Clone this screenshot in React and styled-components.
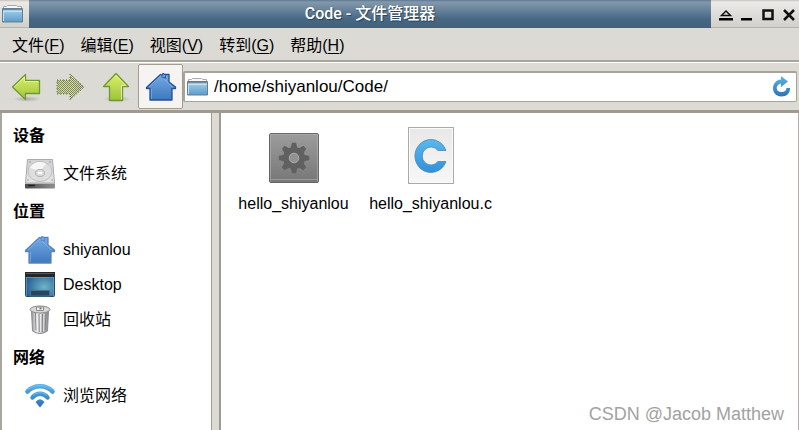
import { useState } from "react";
import styled, { createGlobalStyle } from "styled-components";

const GlobalStyle = createGlobalStyle`
  * {
    box-sizing: border-box;
  }
  body {
    margin: 0;
    background-color: #dcdad5;
    color: #000;
    font-family: "Liberation Sans", "Noto Sans CJK SC", sans-serif;
    font-size: 16px;
    line-height: 20px;
  }
  button,
  input {
    font: inherit;
    color: inherit;
  }
  svg {
    display: block;
    flex-shrink: 0;
  }
`;

const Window = styled.div`
  position: relative;
  display: flex;
  flex-direction: column;
  min-height: 100vh;
`;

const TitleBar = styled.header`
  display: flex;
  height: 28px;
  background: linear-gradient(#5f788f 0, #8398ab 2px, #5c7a95 13px, #486782 19px, #40607c 100%);
`;

const TitleIcon = styled.div`
  display: flex;
  align-items: center;
  width: 29px;
  padding-left: 2px;
  background: linear-gradient(#c4c2be 0, #ebeae7 2px, #d2d0cb 100%);
  border-bottom: 1px solid #b5b2ac;
`;

const Title = styled.h1`
  flex: 1;
  margin: 0;
  font-family: Roboto, "Noto Sans CJK SC", sans-serif;
  font-size: 16px;
  font-weight: 500;
  line-height: 28px;
  text-align: center;
  color: #fff;
  text-shadow: 1px 1px 1px #2b4257;
`;

const WindowButtons = styled.div`
  display: flex;
  padding: 0 0 0 4px;
  background: linear-gradient(#c4c2be 0, #ebeae7 2px, #d2d0cb 100%);
  border-bottom: 1px solid #b5b2ac;
`;

const WindowButton = styled.button`
  display: flex;
  align-items: center;
  justify-content: center;
  width: 21px;
  padding: 2px 0 0;
  border: none;
  background: none;
`;

const MenuBar = styled.nav`
  display: flex;
  gap: 16px;
  height: 34px;
  padding: 0 12px;
  border-bottom: 2px solid #aaa69e;
`;

const MenuButton = styled.button`
  padding: 3px 0 0;
  border: none;
  background: none;
  & u {
    text-underline-offset: 2px;
    text-decoration-thickness: 1px;
  }
`;

const Toolbar = styled.div`
  display: flex;
  align-items: center;
  height: 51px;
  padding: 0 2px 0 3px;
  border-top: 1px solid #fff;
  border-bottom: 3px solid #a19a90;
`;

const ToolButton = styled.button`
  display: flex;
  align-items: center;
  justify-content: center;
  width: 45px;
  height: 45px;
  padding: 0;
  border: ${(props) => (props.$active ? "1px solid #a59b8f" : "none")};
  border-radius: 2px;
  background: ${(props) => (props.$active ? "#f5f4f2" : "none")};
`;

const AddressBar = styled.label`
  display: flex;
  flex: 1;
  align-items: center;
  gap: 5px;
  height: 31px;
  padding: 0 4px 0 2px;
  border: 2px solid #a8a298;
  border-right-width: 1px;
  border-bottom-width: 1px;
  border-radius: 2px;
  background-color: #fff;
`;

const AddressInput = styled.input`
  flex: 1;
  min-width: 0;
  padding: 0;
  border: none;
  outline: none;
  background: none;
  font-size: 17px;
`;

const ReloadButton = styled.button`
  padding: 0;
  border: none;
  background: none;
`;

const Panes = styled.div`
  display: flex;
  flex: 1;
`;

const Sidebar = styled.aside`
  width: 212px;
  padding: 2px 0 12px;
  border-left: 2px solid #a9a59e;
  border-right: 1px solid #a19a90;
  background-color: #fff;
`;

const SidebarHeading = styled.h2`
  margin: 0;
  padding-left: 11px;
  font-size: 16px;
  font-weight: 700;
  line-height: 41px;
`;

const PlaceList = styled.ul`
  margin: 0;
  padding: 0;
  list-style: none;
`;

const PlaceLink = styled.a`
  display: flex;
  align-items: center;
  gap: 7px;
  height: 35px;
  padding-left: 22px;
  color: inherit;
  text-decoration: none;
`;

const FileArea = styled.main`
  display: flex;
  flex: 1;
  align-items: flex-start;
  margin-left: 7px;
  padding: 12px 4px;
  border-left: 2px solid #a19a90;
  border-right: 1px solid #b5b2ac;
  background-color: #fff;
`;

const FileItem = styled.a`
  display: flex;
  flex-direction: column;
  align-items: center;
  width: 137px;
  color: inherit;
  text-decoration: none;
`;

const FileIcon = styled.div`
  display: flex;
  align-items: flex-end;
  height: 59px;
  margin-bottom: 10px;
`;

const Watermark = styled.div`
  position: absolute;
  right: 15px;
  bottom: 6px;
  font-size: 18px;
  color: #a2a2a2;
`;

const FolderIcon = () => (
  <svg width="22" height="22" viewBox="0 0 22 22">
    <defs>
      <linearGradient id="folder" x2="0" y2="1">
        <stop offset="0" stopColor="#acd3ea" />
        <stop offset="1" stopColor="#5b9bca" />
      </linearGradient>
    </defs>
    <path d="M1.5 6V3.5h3l1-1h9l1 1h4V7z" fill="#f7f7f5" stroke="#a9aaa8" />
    <path d="M.5 5.500h20v13.500H.5z" fill="url(#folder)" stroke="#657f91" />
    <path d="M1 6.500h19" stroke="#718b9c" />
    <path d="M1.500 8v10M2 8.500h18" stroke="#c5e0ef" fill="none" />
  </svg>
);

const ArrowIcon = ({ direction }) => {
  const turn = { left: 0, up: 90 }[direction];
  return (
    <svg width="32" height="32" viewBox="0 0 32 32">
      <defs>
        <linearGradient id={`arrow-${direction}`} x2={turn ? 1 : 0} y2={turn ? 0 : 1}>
          <stop offset="0" stopColor="#def06b" />
          <stop offset="1" stopColor="#9cc33a" />
        </linearGradient>
        <radialGradient id="arrowShadow">
          <stop offset="0" stopColor="#777" stopOpacity=".5" />
          <stop offset="1" stopColor="#777" stopOpacity="0" />
        </radialGradient>
      </defs>
      <ellipse cx="17" cy="28" rx="14" ry="3" fill="url(#arrowShadow)" />
      <g transform={`rotate(${turn} 16 16)`}>
        <path
          d="M2.500 16 15.500 3.500V9.500H29.500V22.500H15.500V28.500z"
          fill={`url(#arrow-${direction})`}
          stroke="#6d9a32"
          strokeWidth="1.300"
          strokeLinejoin="round"
        />
        <path d="M4.500 16 14.500 6.200V10.500H28.300" fill="none" stroke="#edf8a6" strokeOpacity=".8" />
      </g>
    </svg>
  );
};

const ForwardIcon = () => (
  <svg width="32" height="32" viewBox="0 0 32 32">
    <defs>
      <pattern id="dither" width="2" height="2" patternUnits="userSpaceOnUse">
        <path d="M0 0h1v1H0zM1 1h1v1H1z" fill="#7d8a58" shapeRendering="crispEdges" />
      </pattern>
      <linearGradient id="forwardFade">
        <stop offset="0.600" stopColor="#d6daa8" />
        <stop offset="1" stopColor="#bfc2b2" />
      </linearGradient>
    </defs>
    <path d="M2 9h13V3l14 13-14 13v-6H2z" fill="url(#forwardFade)" />
    <path d="M2 9h13V3l14 13-14 13v-6H2z" fill="url(#dither)" stroke="#536a3a" strokeDasharray="1 2" />
  </svg>
);

const HomeIcon = ({ stroke = "#244f98" }) => (
  <svg width="32" height="32" viewBox="0 0 32 32">
    <defs>
      <linearGradient id="home" x2="0" y2="1">
        <stop offset="0" stopColor="#77abe4" />
        <stop offset="1" stopColor="#3d78be" />
      </linearGradient>
    </defs>
    <path
      d="M1.500 16.500 15.500 3.500l1.500.500 1-1.500 2 1h4v7.500l6.500 5v1.500h-3.500v11.500H5v-11.500H1.500z"
      fill="url(#home)"
      stroke={stroke}
      strokeWidth="1.300"
      strokeLinejoin="round"
    />
    <path d="M4 16 15.500 5l9 8 3 3.500M6.500 18v10" fill="none" stroke="#98c2ef" strokeOpacity=".5" />
    <path d="M17 4v2.500h3V8M20.500 4v3" fill="none" stroke={stroke} strokeOpacity=".8" />
  </svg>
);

const ReloadIcon = () => (
  <svg width="20" height="22" viewBox="0 0 20 22">
    <defs>
      <linearGradient id="reload" x2="0" y2="1">
        <stop offset="0" stopColor="#5cb6df" />
        <stop offset="1" stopColor="#2f72bc" />
      </linearGradient>
    </defs>
    <path
      d="M9 0l7 5.500L9 11V7.500C3 9 3.500 16 9.500 16c3.200 0 4.700-1.600 5-4H18C18.500 17 14.500 20.500 9.500 20.500 4 20.500 1 16.500 1 12 1 7.500 4.500 3.600 9 3.400z"
      fill="url(#reload)"
    />
  </svg>
);

const DriveIcon = () => (
  <svg width="32" height="32" viewBox="0 0 32 32">
    <defs>
      <linearGradient id="drive" x2="0" y2="1">
        <stop offset="0" stopColor="#d2d2d2" />
        <stop offset="1" stopColor="#e8e8e8" />
      </linearGradient>
      <linearGradient id="driveFront">
        <stop offset="0" stopColor="#4c4c4c" />
        <stop offset="1" stopColor="#909090" />
      </linearGradient>
    </defs>
    <path d="M3.500 1.500h25L30.500 25h-29z" fill="url(#drive)" stroke="#aaa" strokeLinejoin="round" />
    <ellipse cx="16" cy="13.500" rx="12" ry="10" fill="#dedede" stroke="#bdbdbd" />
    <path d="M6 10C9 3 19 3 22 6L16 13z" fill="#f6f6f6" />
    <ellipse cx="16" cy="15" rx="4.500" ry="3.500" fill="#ddd" stroke="#b0b0b0" />
    <path d="M14 15h4" stroke="#fff" strokeWidth="2" />
    <path d="M5 4h2M25 4h2M3 22h2M27 22h2" stroke="#999" />
    <path d="M1 25h30v4.500q0 1-1 1H2q-1 0-1-1z" fill="url(#driveFront)" />
    <path d="M1 25.500h30" stroke="#b5b5b5" />
    <path d="M4 27.500h7" stroke="#222" strokeWidth="1.500" />
  </svg>
);

const DesktopIcon = () => (
  <svg width="32" height="32" viewBox="0 0 32 32">
    <defs>
      <radialGradient id="desktop" cx=".65" cy=".6" r=".65">
        <stop offset="0" stopColor="#6fb4c9" />
        <stop offset="1" stopColor="#295e93" />
      </radialGradient>
    </defs>
    <rect x="1.500" y="3.500" width="29" height="24" rx="1" fill="url(#desktop)" stroke="#26496e" />
    <path d="M2.500 8v19M29.500 8v19M2 8.500h28" stroke="#6a9cc4" strokeOpacity=".7" />
    <path d="M1 3h30v5H1z" fill="#242628" />
    <path d="M2 4.500h28" stroke="#55585b" />
    <path d="M6.500 27v-5.500h19V27z" fill="#27465d" stroke="#48718d" />
  </svg>
);

const TrashIcon = () => (
  <svg width="32" height="32" viewBox="0 0 32 32">
    <defs>
      <linearGradient id="trash">
        <stop offset="0" stopColor="#9a9a9c" />
        <stop offset="0.350" stopColor="#efefef" />
        <stop offset="1" stopColor="#8c8c91" />
      </linearGradient>
    </defs>
    <path d="M7.500 6h17L23.500 27q-7.500 5-15 0z" fill="url(#trash)" stroke="#8a8a8d" />
    <path d="M11.500 9l.500 17M15 10l.200 18M18.500 10l-.200 18M22 9l-.800 17" stroke="#85858a" />
    <path d="M12.800 10l.500 17M16.500 10v18M20 10l-.500 17" stroke="#f2f2f2" strokeOpacity=".7" />
    <ellipse cx="16" cy="5.500" rx="10" ry="3.500" fill="#d8d8d8" stroke="#8c8c8c" />
    <path d="M12.500 3h7v3.500h-7z" fill="#eee" stroke="#8c8c8c" />
    <path d="M15.500 4.500h2" stroke="#666" strokeWidth="1.500" />
  </svg>
);

const NetworkIcon = () => (
  <svg width="32" height="32" viewBox="0 0 32 32">
    <defs>
      <linearGradient id="wifi" x1="0" y1="4" x2="0" y2="28" gradientUnits="userSpaceOnUse">
        <stop offset="0" stopColor="#56b4e6" />
        <stop offset="1" stopColor="#2c6fb8" />
      </linearGradient>
    </defs>
    <g fill="none" stroke="url(#wifi)" strokeLinecap="round">
      <path d="M3.500 11.500C10 4.500 22 4.500 28.500 11.500" strokeWidth="4.600" />
      <path d="M8.500 17.500C12.500 12.500 19.500 12.500 23.500 17.500" strokeWidth="4.400" />
    </g>
    <path d="M11.500 22q4.500-5.500 9 0L16 27.500z" fill="url(#wifi)" />
    <path d="M4 9.500C10 4.300 22 4.300 28 9.500M9 15.500C13 11.800 19 11.800 23 15.500" fill="none" stroke="#a8dcf4" strokeOpacity=".5" />
  </svg>
);

const ExecutableIcon = () => (
  <svg width="52" height="52" viewBox="0 0 52 52">
    <defs>
      <linearGradient id="plate" x2="0" y2="1">
        <stop offset="0" stopColor="#9c9c9c" />
        <stop offset="1" stopColor="#777" />
      </linearGradient>
    </defs>
    <rect x="1.500" y="1.500" width="49" height="49" rx="1.500" fill="url(#plate)" stroke="#666" />
    <path d="M2.500 49.500v-47h47v47M2.500 47.500h47" fill="none" stroke="#bcbcbc" strokeOpacity=".5" />
    <g fill="#606060" transform="translate(26 26)">
      <circle r="11" />
      {[0, 45, 90, 135].map((angle) => (
        <path key={angle} d="M-3.300-10 -2-15.200h4L3.300-10V10L2 15.200h-4L-3.300 10z" transform={`rotate(${angle})`} />
      ))}
      <circle r="4.800" fill="#929292" stroke="#aaa" />
    </g>
  </svg>
);

const CSourceIcon = () => (
  <svg width="46" height="58" viewBox="0 0 46 58">
    <defs>
      <linearGradient id="paper" x2="0" y2="1">
        <stop offset="0" stopColor="#e8e8e8" />
        <stop offset="1" stopColor="#f7f7f7" />
      </linearGradient>
      <linearGradient id="ring" x2="0" y2="1">
        <stop offset="0" stopColor="#59b8ee" />
        <stop offset="1" stopColor="#2f91df" />
      </linearGradient>
    </defs>
    <rect x=".5" y="1.500" width="45" height="56" fill="url(#paper)" stroke="#aaa" />
    <rect x="1.500" y="2.500" width="43" height="54" fill="none" stroke="#fafafa" />
    <path
      d="M38 24.500H30A8.800 9 0 1 0 30 35.500H38A16 16.500 0 1 1 38 24.500z"
      fill="url(#ring)"
      stroke="#5386ab"
      strokeWidth=".8"
    />
  </svg>
);

const menus = [
  { label: "文件", accessKey: "F" },
  { label: "编辑", accessKey: "E" },
  { label: "视图", accessKey: "V" },
  { label: "转到", accessKey: "G" },
  { label: "帮助", accessKey: "H" },
];

const sections = [
  { title: "设备", places: [{ name: "文件系统", Icon: DriveIcon }] },
  {
    title: "位置",
    places: [
      { name: "shiyanlou", Icon: HomeIcon },
      { name: "Desktop", Icon: DesktopIcon },
      { name: "回收站", Icon: TrashIcon },
    ],
  },
  { title: "网络", places: [{ name: "浏览网络", Icon: NetworkIcon }] },
];

const files = [
  { name: "hello_shiyanlou", Icon: ExecutableIcon },
  { name: "hello_shiyanlou.c", Icon: CSourceIcon },
];

const App = () => {
  const [path, setPath] = useState("/home/shiyanlou/Code/");

  return (
    <>
      <GlobalStyle />
      <Window>
        <TitleBar>
          <TitleIcon>
            <FolderIcon />
          </TitleIcon>
          <Title>Code - 文件管理器</Title>
          <WindowButtons>
            <WindowButton aria-label="Shade">
              <svg width="14" height="14" viewBox="0 0 14 14">
                <path d="M2.500 7.500 7 3l4.500 4.500z" fill="none" stroke="#111" strokeWidth="1.500" />
                <path d="M0 10h14v2.500H0z" fill="#000" />
              </svg>
            </WindowButton>
            <WindowButton aria-label="Minimize">
              <svg width="14" height="14" viewBox="0 0 14 14">
                <path d="M1 10h11v2.500H1z" fill="#000" />
              </svg>
            </WindowButton>
            <WindowButton aria-label="Maximize">
              <svg width="14" height="14" viewBox="0 0 14 14">
                <path d="M2.500 2.500h9v8.500h-9z" fill="none" stroke="#111" strokeWidth="2.500" />
              </svg>
            </WindowButton>
            <WindowButton aria-label="Close">
              <svg width="14" height="14" viewBox="0 0 14 14">
                <path d="M2 2l10 10M12 2 2 12" stroke="#111" strokeWidth="2.500" />
              </svg>
            </WindowButton>
          </WindowButtons>
        </TitleBar>

        <MenuBar>
          {menus.map(({ label, accessKey }) => (
            <MenuButton key={accessKey}>
              {label}(<u>{accessKey}</u>)
            </MenuButton>
          ))}
        </MenuBar>

        <Toolbar>
          <ToolButton aria-label="Back">
            <ArrowIcon direction="left" />
          </ToolButton>
          <ToolButton aria-label="Forward" disabled>
            <ForwardIcon />
          </ToolButton>
          <ToolButton aria-label="Up">
            <ArrowIcon direction="up" />
          </ToolButton>
          <ToolButton aria-label="Home" $active>
            <HomeIcon />
          </ToolButton>
          <AddressBar>
            <FolderIcon />
            <AddressInput
              aria-label="Location"
              value={path}
              onChange={(e) => setPath(e.target.value)}
            />
            <ReloadButton aria-label="Reload">
              <ReloadIcon />
            </ReloadButton>
          </AddressBar>
        </Toolbar>

        <Panes>
          <Sidebar>
            {sections.map(({ title, places }) => (
              <section key={title}>
                <SidebarHeading>{title}</SidebarHeading>
                <PlaceList>
                  {places.map(({ name, Icon }) => (
                    <li key={name}>
                      <PlaceLink href="#">
                        <Icon stroke="#5685bd" />
                        {name}
                      </PlaceLink>
                    </li>
                  ))}
                </PlaceList>
              </section>
            ))}
          </Sidebar>
          <FileArea>
            {files.map(({ name, Icon }) => (
              <FileItem key={name} href="#">
                <FileIcon>
                  <Icon />
                </FileIcon>
                {name}
              </FileItem>
            ))}
          </FileArea>
        </Panes>
        <Watermark>CSDN @Jacob Matthew</Watermark>
      </Window>
    </>
  );
};

export default App;
